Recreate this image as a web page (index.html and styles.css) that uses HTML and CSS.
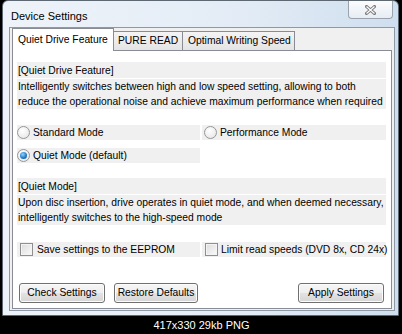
FILE: index.html
```html
<!DOCTYPE html>
<html lang="en">
<head>
    <meta charset="UTF-8">
    <title>Device Settings</title>
    <link rel="stylesheet" href="styles.css">
</head>
<body>
    <div id="shot">
        <div class="window">
            <div class="titlebar">
                <span class="title">Device Settings</span>
                <span class="close">
                    <svg width="11" height="10" viewBox="0 0 11 10">
                        <path d="M1.5 1.5 L9.5 8.5 M9.5 1.5 L1.5 8.5" stroke="#7a7a7a" stroke-width="3" stroke-linecap="square"/>
                        <path d="M1.5 1.5 L9.5 8.5 M9.5 1.5 L1.5 8.5" stroke="#fdfdfd" stroke-width="1.2"/>
                    </svg>
                </span>
            </div>
            <div class="client">
                <ul class="tabs">
                    <li class="tab selected">Quiet Drive Feature</li>
                    <li class="tab">PURE READ</li>
                    <li class="tab">Optimal Writing Speed</li>
                </ul>
                <div class="panel">
                    <div class="info">
                        <div class="info-head">[Quiet Drive Feature]</div>
                        <div class="info-body">Intelligently switches between high and low speed setting, allowing to both reduce the operational noise and achieve maximum performance when required</div>
                    </div>

                    <div class="options radios">
                        <label class="opt"><span class="radio"></span>Standard Mode</label>
                        <label class="opt right"><span class="radio"></span>Performance Mode</label>
                        <label class="opt"><span class="radio checked"></span>Quiet Mode (default)</label>
                    </div>

                    <div class="info second">
                        <div class="info-head">[Quiet Mode]</div>
                        <div class="info-body">Upon disc insertion, drive operates in quiet mode, and when deemed necessary, intelligently switches to the high-speed mode</div>
                    </div>

                    <div class="options checks">
                        <label class="opt"><span class="check"></span>Save settings to the EEPROM</label>
                        <label class="opt right"><span class="check"></span>Limit read speeds (DVD 8x, CD 24x)</label>
                    </div>

                    <div class="buttons">
                        <span class="btn">Check Settings</span>
                        <span class="btn">Restore Defaults</span>
                        <span class="btn apply">Apply Settings</span>
                    </div>
                </div>
            </div>
        </div>
        <div class="caption">417x330 29kb PNG</div>
    </div>
</body>
</html>
```

FILE: styles.css
```css
*{
    margin: 0;
    padding: 0;
    box-sizing: border-box;
}
ul{
    list-style: none;
}
body{
    background: #000;
    font-family: "Liberation Sans", Arial, sans-serif;
    font-size: 10.3px;
    color: #000;
}
#shot{
    width: 402px;
    height: 334px;
    background: #000;
    overflow: hidden;
}
.window{
    margin-left: 2px;
    width: 397px;
    height: 316px;
    border: 1px solid #5d6872;
    border-radius: 6px 6px 0 0;
    background: linear-gradient(to right, #eef3f9, #e3ecf6 60%, #cfdeee);
}
.titlebar{
    height: 26px;
    display: flex;
    align-items: flex-start;
    justify-content: space-between;
}
.title{
    padding: 9px 0 0 8px;
    font-size: 11px;
}
.close{
    width: 45px;
    height: 18px;
    margin-right: 5px;
    border: 1px solid #9aa3ad;
    border-top: none;
    border-radius: 0 0 4px 4px;
    background: linear-gradient(#fbfcfd, #e7edf4);
    display: flex;
    align-items: center;
    justify-content: center;
}
.client{
    margin: 0 3px 0 6px;
    height: 284px;
    border: 1px solid #8d99a6;
    background: #f0f0f0;
    padding: 0 2px;
}
.tabs{
    height: 22px;
    display: flex;
    align-items: flex-end;
    position: relative;
    z-index: 1;
}
.tab{
    height: 19px;
    line-height: 18px;
    padding: 0 5px;
    white-space: nowrap;
    border: 1px solid #898c95;
    border-bottom: none;
    background: linear-gradient(#f4f4f4, #e4e4e4);
}
.tab + .tab{
    border-left: none;
}
.tab.selected{
    height: 23px;
    line-height: 21px;
    margin-bottom: -1px;
    width: 102px;
    background: #fff;
}
.tabs .tab:nth-child(2){
    width: 69px;
    padding-left: 4px;
}
.tabs .tab:nth-child(3){
    width: 112px;
}
.panel{
    height: 259px;
    border: 1px solid #898c95;
    background: #fff;
    padding: 11px 5px 0 4px;
}
.info-head{
    height: 16px;
    line-height: 17px;
    padding-left: 1px;
    background: #f0f0f0;
}
.info-body{
    margin-top: 1px;
    height: 30px;
    line-height: 15px;
    padding-left: 1px;
    background: #f0f0f0;
}
.second{
    margin-top: 15px;
}
.options{
    display: grid;
    grid-template-columns: 183px 184px;
    column-gap: 2px;
}
.radios{
    margin-top: 16px;
    row-gap: 8px;
}
.checks{
    margin-top: 17px;
}
.opt{
    height: 15px;
    display: flex;
    align-items: center;
    white-space: nowrap;
    background: #f0f0f0;
}
.opt.right{
    padding-left: 2px;
}
.radio{
    flex-shrink: 0;
    width: 13px;
    height: 13px;
    margin-right: 3px;
    border-radius: 50%;
    border: 1px solid #979797;
    background: radial-gradient(circle at 40% 35%, #fff, #ebebeb 70%, #d8d8d8);
    position: relative;
}
.radio.checked::after{
    content: "";
    position: absolute;
    left: 2px;
    top: 2px;
    width: 7px;
    height: 7px;
    border-radius: 50%;
    background: radial-gradient(circle at 40% 35%, #8fd3ff, #1b76c6 60%, #0d4f8f);
}
.check{
    flex-shrink: 0;
    width: 13px;
    height: 13px;
    margin: 0 4px 0 3px;
    border: 1px solid #8f8f8f;
    background: linear-gradient(135deg, #dcdcdc, #fafafa);
    box-shadow: inset 0 0 0 1px #f4f4f4;
}
.right .check{
    margin: 0 3px 0 1px;
}
.buttons{
    margin-top: 26px;
    padding: 0 2px;
    display: flex;
    gap: 9px;
}
.btn{
    height: 20px;
    width: 86px;
    line-height: 18px;
    text-align: center;
    white-space: nowrap;
    border: 1px solid #707070;
    border-radius: 3px;
    background: linear-gradient(#f6f6f6 0%, #eeeeee 50%, #e2e2e2 51%, #d6d6d6 100%);
    box-shadow: inset 0 0 0 1px #fcfcfc;
}
.btn:nth-child(2){
    width: 84px;
}
.btn.apply{
    margin-left: auto;
}
.caption{
    height: 18px;
    line-height: 18px;
    text-align: center;
    color: #fff;
    font-size: 11px;
    padding-left: 1px;
}
```
